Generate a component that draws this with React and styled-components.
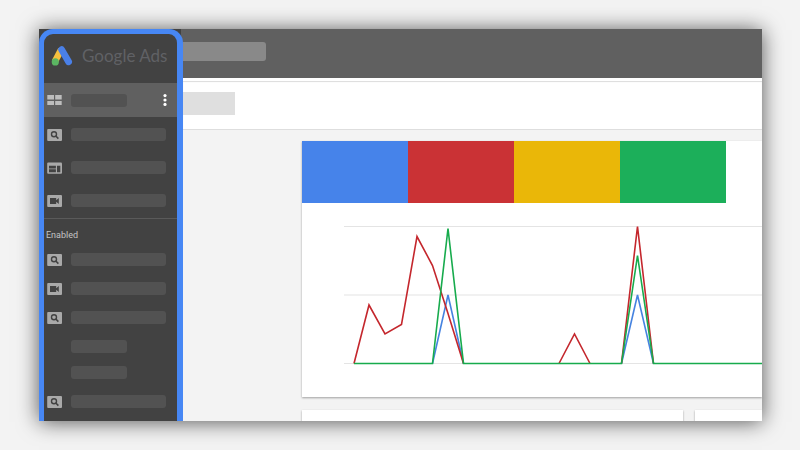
import styled, { createGlobalStyle } from "styled-components";

const GlobalStyle = createGlobalStyle`
  * {
    box-sizing: border-box;
  }

  body {
    margin: 0;
    background: #f3f3f3;
    font-family: Roboto, "Liberation Sans", sans-serif;
  }
`;

// Outer page, leaves room for the window shadow
const Page = styled.div`
  display: flex;
  height: 100vh;
  padding: 29px 38px 29px 39px;
`;

const Window = styled.div`
  display: flex;
  flex: 1;
  min-width: 0;
  background: #f3f3f3;
  box-shadow: 0 1px 20px rgba(0, 0, 0, 0.66);
`;

// Sidebar
const Sidebar = styled.aside`
  flex: none;
  display: flex;
  width: 144px;
  background: linear-gradient(to right, #424242 142px, #606060 142px, #606060 144px);
  overflow: hidden;
`;

const SidebarPanel = styled.div`
  flex: 1;
  min-width: 0;
  border: solid #4787f4;
  border-width: 5px 6px 0 5px;
  border-radius: 14px 14px 0 0;
  background: #424242;
`;

const Brand = styled.div`
  display: flex;
  align-items: center;
  gap: 9px;
  height: 49px;
  padding: 0 0 6px 7px;
`;

const BrandName = styled.span`
  color: #606165;
  font-family: Lato, sans-serif;
  font-size: 17px;
  line-height: 20px;
  white-space: nowrap;
`;

const NavList = styled.ul`
  margin: 0;
  padding: ${({ $top }) => $top || 0}px 0 0;
  list-style: none;
`;

const NavButton = styled.button`
  display: flex;
  align-items: center;
  gap: 8px;
  width: 100%;
  height: ${({ $height }) => $height}px;
  margin: 0;
  padding: 0 0 0 3px;
  border: 0;
  background: none;
  cursor: pointer;
`;

const ActiveRow = styled.div`
  display: flex;
  align-items: center;
  justify-content: space-between;
  height: 34px;
  padding-right: 8px;
  background: #606060;
`;

const MenuButton = styled.button`
  display: flex;
  padding: 0;
  border: 0;
  background: none;
  cursor: pointer;
`;

const Bar = styled.span`
  width: ${({ $short }) => ($short ? 56 : 95)}px;
  height: 13px;
  border-radius: 3px;
  background: #525252;
`;

const SubList = styled.ul`
  margin: 0;
  padding: 1px 0 2px 24px;
  list-style: none;
`;

const Divider = styled.hr`
  height: 1px;
  margin: 1px 0 0;
  border: 0;
  background: #5a5a5a;
`;

const SectionLabel = styled.h2`
  margin: 0;
  padding: 10px 2px 4px;
  color: #c4c4c4;
  font-family: Roboto, sans-serif;
  font-size: 9px;
  font-weight: 400;
  line-height: 12px;
`;

// Main area
const Main = styled.main`
  display: flex;
  flex: 1;
  flex-direction: column;
  min-width: 0;
  overflow: hidden;
`;

const TopBar = styled.header`
  flex: none;
  height: 49px;
  padding-top: 13px;
  background: #606060;
`;

const SearchInput = styled.input`
  display: block;
  width: 83px;
  height: 19px;
  padding: 0 6px;
  border: 0;
  border-radius: 0 3px 3px 0;
  background: #898989;
`;

const SubHeader = styled.div`
  flex: none;
  height: 52px;
  border-top: 3px solid #fff;
  border-bottom: 1px solid #dedede;
  background: #fff;
  box-shadow: inset 0 1px 1px #dcdcdc;
`;

const TitleBlock = styled.div`
  width: 52px;
  height: 23px;
  margin-top: 11px;
  background: #dfdfdf;
`;

const Content = styled.div`
  display: flex;
  flex: 1;
  flex-direction: column;
  gap: 13px;
  min-height: 0;
  padding: 11px 0 0 119px;
`;

const Card = styled.section`
  flex: ${({ $size }) => $size || "none"};
  min-width: 0;
  background: #fff;
  box-shadow: 0 1px 2px rgba(0, 0, 0, 0.35);
`;

const Tiles = styled.div`
  display: grid;
  grid-template-columns: repeat(4, 106px);
  height: 62px;
`;

const Tile = styled.div`
  background: ${({ $color }) => $color};
`;

const ChartArea = styled.div`
  padding: 21px 0 30px 42px;
`;

const Chart = styled.svg`
  display: block;
  width: 100%;
`;

const CardRow = styled.div`
  display: flex;
  flex: 1;
  gap: 12px;
`;

const badge = "#a9a9a9";
const dark = "#424242";

const AdsLogo = () => (
  <svg width="22" height="20" viewBox="0 0 22 20" aria-hidden="true">
    <path d="M10.2 3.6 4 15.2" stroke="#f6bf3e" strokeWidth="6.6" />
    <path
      d="M10.6 3.6 17.6 15.8"
      stroke="#4a80e8"
      strokeWidth="6.8"
      strokeLinecap="round"
    />
    <circle cx="4.3" cy="15.9" r="3.6" fill="#5bb562" />
  </svg>
);

const GridIcon = () => (
  <svg width="16" height="12" viewBox="0 0 16 12" aria-hidden="true">
    <path
      d="M0.3 1h6.7v4.4H0.3zM8.2 1h6.5v4.4H8.2zM0.3 6.9h6.7v4.2H0.3zM8.2 6.9h6.5v4.2H8.2z"
      fill="#bdbdbd"
    />
  </svg>
);

const SearchIcon = () => (
  <svg width="16" height="12" viewBox="0 0 16 12" aria-hidden="true">
    <rect x="0.2" width="14.8" height="12" rx="1" fill={badge} />
    <circle cx="7" cy="5.2" r="2.5" fill="none" stroke={dark} strokeWidth="1.4" />
    <path d="m8.8 7 2.6 2.6" stroke={dark} strokeWidth="1.6" />
  </svg>
);

const DisplayIcon = () => (
  <svg width="16" height="12" viewBox="0 0 16 12" aria-hidden="true">
    <rect x="0.2" y="0.4" width="14.8" height="11.4" rx="1" fill={badge} />
    <path
      d="M2 3.8h6.9v2.8H2zM2 7.3h6.9v3H2zM10 3.8h3.3v6.5H10z"
      fill={dark}
    />
  </svg>
);

const VideoIcon = () => (
  <svg width="16" height="12" viewBox="0 0 16 12" aria-hidden="true">
    <rect x="0.2" width="14.8" height="12" rx="1" fill={badge} />
    <path d="M3 3h6.2v2.3L11.8 3v6.1L9.2 6.8v2.3H3z" fill={dark} />
  </svg>
);

const MoreIcon = () => (
  <svg width="8" height="14" viewBox="0 0 8 14" aria-hidden="true">
    <circle cx="4" cy="2.6" r="1.6" fill="#fff" />
    <circle cx="4" cy="7" r="1.6" fill="#fff" />
    <circle cx="4" cy="11.4" r="1.6" fill="#fff" />
  </svg>
);

const tileColors = ["#4683ea", "#ca3235", "#eab708", "#1caf5a"];

// Blue and red are only drawn where they leave the baseline
const lines = [
  { color: "#4683e0", path: "M88.5 138 104 69.5 119.5 138M277.5 138 293.5 69.5 309.5 138" },
  {
    color: "#c4272d",
    path: "M10 138 25 79.5 41 108.5 57.5 99 73 11 88.5 40 104 88 119.5 138M215 138 230.5 108.5 246 138M277.5 138 293.5 1 309.5 138",
  },
  { color: "#17ab4d", path: "M10 138H88.5L104 3 119.5 138H277.5L293.5 30 309.5 138H418" },
];

// One row of the sidebar: an icon and its bar
const NavItem = ({ icon: Icon, label, height }) => (
  <li>
    <NavButton type="button" aria-label={label} $height={height}>
      <Icon />
      <Bar />
    </NavButton>
  </li>
);

const App = () => {
  return (
    <>
      <GlobalStyle />
      <Page>
        <Window>
          <Sidebar>
            <SidebarPanel>
              <Brand>
                <AdsLogo />
                <BrandName>Google Ads</BrandName>
              </Brand>
              <nav>
                <ActiveRow>
                  <NavButton type="button" aria-label="All campaigns" $height={34}>
                    <GridIcon />
                    <Bar $short />
                  </NavButton>
                  <MenuButton type="button" aria-label="More">
                    <MoreIcon />
                  </MenuButton>
                </ActiveRow>
                <NavList $top={1}>
                  <NavItem icon={SearchIcon} label="Search campaigns" height={33} />
                  <NavItem icon={DisplayIcon} label="Display campaigns" height={33} />
                  <NavItem icon={VideoIcon} label="Video campaigns" height={33} />
                </NavList>
                <Divider />
                <SectionLabel>Enabled</SectionLabel>
                <NavList>
                  <NavItem icon={SearchIcon} label="Search campaign 1" height={29} />
                  <NavItem icon={VideoIcon} label="Video campaign" height={29} />
                  <NavItem icon={SearchIcon} label="Search campaign 2" height={29} />
                  <li>
                    <SubList>
                      <li>
                        <NavButton type="button" aria-label="Ad group 1" $height={26}>
                          <Bar $short />
                        </NavButton>
                      </li>
                      <li>
                        <NavButton type="button" aria-label="Ad group 2" $height={26}>
                          <Bar $short />
                        </NavButton>
                      </li>
                    </SubList>
                  </li>
                  <NavItem icon={SearchIcon} label="Search campaign 3" height={29} />
                </NavList>
              </nav>
            </SidebarPanel>
          </Sidebar>
          <Main>
            <TopBar>
              <SearchInput type="text" aria-label="Search" />
            </TopBar>
            <SubHeader>
              <TitleBlock />
            </SubHeader>
            <Content>
              <Card>
                <Tiles>
                  {tileColors.map((color) => (
                    <Tile key={color} $color={color} />
                  ))}
                </Tiles>
                <ChartArea>
                  <Chart viewBox="0 0 418 143" role="img" aria-label="Performance">
                    <g transform="translate(0 1.5)">
                      <path
                        d="M0 1h418M0 69.5h418M0 138h418"
                        stroke="#e4e4e4"
                        strokeWidth="1.2"
                      />
                      {lines.map(({ color, path }) => (
                        <path
                          key={color}
                          d={path}
                          fill="none"
                          stroke={color}
                          strokeWidth="1.6"
                        />
                      ))}
                    </g>
                  </Chart>
                </ChartArea>
              </Card>
              <CardRow>
                <Card $size="381" />
                <Card $size="67" />
              </CardRow>
            </Content>
          </Main>
        </Window>
      </Page>
    </>
  );
};

export default App;
